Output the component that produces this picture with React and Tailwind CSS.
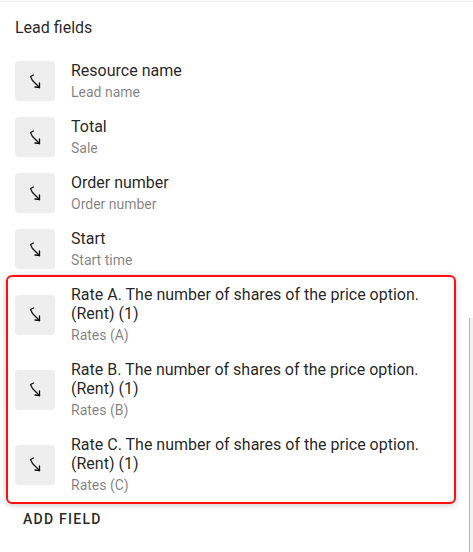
import React from 'react';

const fields = [
  { title: 'Resource name', sub: 'Lead name' },
  { title: 'Total', sub: 'Sale' },
  { title: 'Order number', sub: 'Order number' },
  { title: 'Start', sub: 'Start time' },
];

const rates = [
  { title: 'Rate A. The number of shares of the price option. (Rent) (1)', sub: 'Rates (A)' },
  { title: 'Rate B. The number of shares of the price option. (Rent) (1)', sub: 'Rates (B)' },
  { title: 'Rate C. The number of shares of the price option. (Rent) (1)', sub: 'Rates (C)' },
];

function HookArrow() {
  return (
    <svg className="w-[13px] h-[15px]" viewBox="0 0 13 15" fill="none" stroke="#111" strokeWidth="1.3" strokeLinecap="round" strokeLinejoin="round">
      <path d="M4.5 1 L1.5 2.5 L3.5 6.5 L10.5 13.5" />
      <path d="M10.5 13.5 L10.5 9" />
      <path d="M10.5 13.5 L6 13" />
    </svg>
  );
}

function FieldRow({ title, sub }) {
  return (
    <div className="flex items-center gap-4 py-2">
      <div className="w-10 h-10 shrink-0 rounded bg-[#eeeeee] flex items-center justify-center">
        <HookArrow />
      </div>
      <div className="min-w-0">
        <div className="text-base leading-[19px] text-black/[0.87]">{title}</div>
        <div className="text-sm leading-5 mt-[2px] -mb-px text-black/50">{sub}</div>
      </div>
    </div>
  );
}

export default function App() {
  return (
    <div className="relative w-[473px] h-[552px] overflow-hidden bg-white" style={{ fontFamily: 'Roboto, "Liberation Sans", sans-serif' }}>
      <div className="h-px mt-px bg-[#eeeeee]" />
      <div className="pl-[15px] pt-[14px] pb-[13px] text-base leading-6 text-black/[0.87]">Lead fields</div>
      <div className="px-[15px]">
        {fields.map((f) => (
          <FieldRow key={f.title} {...f} />
        ))}
      </div>
      <div className="ml-[6px] w-[450px] -mt-[2px] border-2 border-[#ff1010] rounded-md px-[7px] shadow-[0_1px_6px_rgba(0,0,0,0.22)]">
        {rates.map((f) => (
          <FieldRow key={f.title} {...f} />
        ))}
      </div>
      <div className="pl-[15px]">
        <button className="px-2 pt-[5px] pb-[3px] text-sm font-medium tracking-[1.25px] uppercase text-black/[0.87]">Add field</button>
      </div>
      <div className="absolute right-0 top-[318px] bottom-0 w-[4px] border-l border-[#b5b5b5] bg-[#f2f2f2]" />
    </div>
  );
}
